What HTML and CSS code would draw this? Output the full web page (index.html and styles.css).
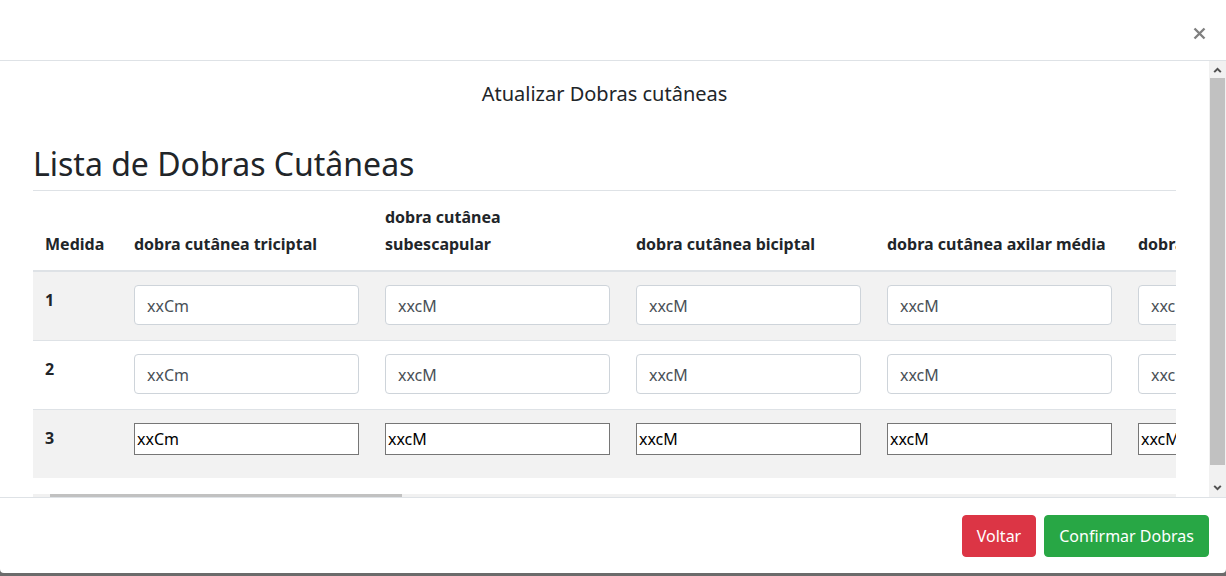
FILE: index.html
```html
<!DOCTYPE html>
<html lang="pt-BR">
<head>
<meta charset="utf-8">
<title>Atualizar Dobras cutâneas</title>
<link rel="stylesheet" href="styles.css">
</head>
<body>
<div class="modal">
  <div class="modal-header">
    <button class="close" type="button" aria-label="Close">
      <svg width="13" height="13" viewBox="0 0 13 13" aria-hidden="true"><path d="M1.5 1.5 L11.5 11.5 M11.5 1.5 L1.5 11.5" stroke="#808080" stroke-width="2.4" stroke-linecap="butt"/></svg>
    </button>
  </div>
  <div class="modal-body">
    <div class="body-scroll">
      <h5 class="modal-title">Atualizar Dobras cutâneas</h5>
      <div class="content">
        <h2 class="list-title">Lista de Dobras Cutâneas</h2>
        <div class="table-wrap">
          <div class="table-view">
            <table class="dobras">
              <colgroup>
                <col class="c-med">
                <col class="c-dob"><col class="c-dob"><col class="c-dob"><col class="c-dob"><col class="c-dob"><col class="c-dob"><col class="c-dob">
                <col class="c-dob"><col class="c-dob"><col class="c-dob"><col class="c-dob"><col class="c-dob"><col class="c-dob"><col class="c-dob">
              </colgroup>
              <thead>
                <tr>
                  <th>Medida</th>
                  <th>dobra cutânea triciptal</th>
                  <th>dobra cutânea<br>subescapular</th>
                  <th>dobra cutânea biciptal</th>
                  <th>dobra cutânea axilar média</th>
                  <th>dobra cutânea supra-ilíaca</th>
                  <th>dobra cutânea abdominal</th>
                  <th>dobra cutânea coxa</th>
                  <th>dobra cutânea panturrilha</th>
                  <th>dobra cutânea peitoral</th>
                  <th>dobra cutânea torácica</th>
                  <th>dobra cutânea supraespinhal</th>
                  <th>dobra cutânea perna medial</th>
                  <th>dobra cutânea antebraço</th>
                  <th>dobra cutânea axilar</th>
                </tr>
              </thead>
              <tbody>
                <tr>
                  <th class="num">1</th>
                  <td><input class="fc" value="xxCm"></td>
                  <td><input class="fc" value="xxcM"></td>
                  <td><input class="fc" value="xxcM"></td>
                  <td><input class="fc" value="xxcM"></td>
                  <td><input class="fc" value="xxcM"></td>
                  <td><input class="fc" value="xxcM"></td>
                  <td><input class="fc" value="xxcM"></td>
                  <td><input class="fc" value="xxcM"></td>
                  <td><input class="fc" value="xxcM"></td>
                  <td><input class="fc" value="xxcM"></td>
                  <td><input class="fc" value="xxcM"></td>
                  <td><input class="fc" value="xxcM"></td>
                  <td><input class="fc" value="xxcM"></td>
                  <td><input class="fc" value="xxcM"></td>
                </tr>
                <tr>
                  <th class="num">2</th>
                  <td><input class="fc" value="xxCm"></td>
                  <td><input class="fc" value="xxcM"></td>
                  <td><input class="fc" value="xxcM"></td>
                  <td><input class="fc" value="xxcM"></td>
                  <td><input class="fc" value="xxcM"></td>
                  <td><input class="fc" value="xxcM"></td>
                  <td><input class="fc" value="xxcM"></td>
                  <td><input class="fc" value="xxcM"></td>
                  <td><input class="fc" value="xxcM"></td>
                  <td><input class="fc" value="xxcM"></td>
                  <td><input class="fc" value="xxcM"></td>
                  <td><input class="fc" value="xxcM"></td>
                  <td><input class="fc" value="xxcM"></td>
                  <td><input class="fc" value="xxcM"></td>
                </tr>
                <tr>
                  <th class="num">3</th>
                  <td><input class="plain" value="xxCm"></td>
                  <td><input class="plain" value="xxcM"></td>
                  <td><input class="plain" value="xxcM"></td>
                  <td><input class="plain" value="xxcM"></td>
                  <td><input class="plain" value="xxcM"></td>
                  <td><input class="plain" value="xxcM"></td>
                  <td><input class="plain" value="xxcM"></td>
                  <td><input class="plain" value="xxcM"></td>
                  <td><input class="plain" value="xxcM"></td>
                  <td><input class="plain" value="xxcM"></td>
                  <td><input class="plain" value="xxcM"></td>
                  <td><input class="plain" value="xxcM"></td>
                  <td><input class="plain" value="xxcM"></td>
                  <td><input class="plain" value="xxcM"></td>
                </tr>
              </tbody>
            </table>
          </div>
          <div class="hscroll">
            <div class="sb-btn"><svg width="17" height="17" viewBox="0 0 17 17" aria-hidden="true"><polygon points="10,4.5 6,8.5 10,12.5 11.3,11 8.8,8.5 11.3,6" fill="#505050"/></svg></div>
            <div class="h-track"><div class="h-thumb"></div></div>
            <div class="sb-btn"><svg width="17" height="17" viewBox="0 0 17 17" aria-hidden="true"><polygon points="7,4.5 11,8.5 7,12.5 5.7,11 8.2,8.5 5.7,6" fill="#505050"/></svg></div>
          </div>
        </div>
      </div>
    </div>
    <div class="vscroll" aria-hidden="true">
      <div class="sb-btn"><svg width="17" height="17" viewBox="0 0 17 17"><polygon points="4.5,10.5 8.5,6.5 12.5,10.5 11.1,11.8 8.5,9.2 5.9,11.8" fill="#505050"/></svg></div>
      <div class="v-track"><div class="v-thumb"></div></div>
      <div class="sb-btn"><svg width="17" height="17" viewBox="0 0 17 17"><polygon points="4.5,6.5 8.5,10.5 12.5,6.5 11.1,5.2 8.5,7.8 5.9,5.2" fill="#505050"/></svg></div>
    </div>
  </div>
  <div class="modal-footer">
    <button class="btn btn-danger" type="button">Voltar</button>
    <button class="btn btn-success" type="button">Confirmar Dobras</button>
  </div>
</div>
</body>
</html>
```
FILE: styles.css
```css
html, body {
  margin: 0;
  height: 100%;
  overflow: hidden;
  background: #6b6b6b;
}

body {
  font-family: "Noto Sans", "Open Sans", sans-serif;
  font-size: 16px;
  color: #212529;
}

.modal {
  height: 573px;
  background: #fff;
  display: flex;
  flex-direction: column;
  border-radius: 0 0 4px 4px;
}

.modal-header {
  flex: none;
  height: 60px;
  border-bottom: 1px solid #dee2e6;
  display: flex;
  justify-content: flex-end;
  align-items: flex-start;
}

.close {
  margin: 27px 20px 0 0;
  padding: 0;
  border: 0;
  background: transparent;
  display: block;
  line-height: 0;
  cursor: pointer;
}

.modal-body {
  flex: none;
  height: 436px;
  display: flex;
  overflow: hidden;
}

.body-scroll {
  flex: 1;
  min-width: 0;
  overflow: hidden;
  padding-top: 18px;
}

.modal-title {
  margin: 0;
  font-size: 20px;
  line-height: 30px;
  font-weight: 400;
  text-align: center;
}

.content {
  margin: 0 33px;
}

.list-title {
  margin: 36px 0 0;
  font-size: 32px;
  line-height: 38px;
  font-weight: 400;
  padding-bottom: 7px;
  border-bottom: 1px solid #dee2e6;
}

.table-view {
  overflow: hidden;
}

.dobras {
  table-layout: fixed;
  width: 3603px;
  border-collapse: collapse;
  margin-bottom: 16px;
}

.c-med { width: 89px; }
.c-dob { width: 251px; }

.dobras th,
.dobras td {
  padding: 13px 12px 12px;
  text-align: left;
}

.dobras thead th {
  vertical-align: bottom;
  border-bottom: 2px solid #dee2e6;
  font-weight: 700;
  line-height: 27px;
  white-space: nowrap;
  overflow: visible;
}

.dobras tbody td,
.dobras tbody th {
  border-top: 1px solid #dee2e6;
  vertical-align: top;
  height: 43px;
}

.dobras tbody tr:nth-child(odd) {
  background: #f2f2f2;
}

.dobras tbody th.num {
  padding-top: 16px;
  height: 40px;
  line-height: 24px;
  font-weight: 700;
}

.fc {
  display: block;
  box-sizing: border-box;
  width: 225px;
  height: 40px;
  padding: 7px 12px 5px;
  border: 1px solid #ced4da;
  border-radius: 4px;
  background: #fff;
  font-family: "Noto Sans", sans-serif;
  font-size: 16px;
  color: #495057;
}

.plain {
  display: block;
  box-sizing: border-box;
  width: 225px;
  height: 32px;
  padding: 0 2px;
  border: 1px solid #767676;
  border-radius: 0;
  background: #fff;
  font-family: "Noto Sans", sans-serif;
  font-size: 16px;
  color: #000;
}

/* drawn scrollbars */
.hscroll {
  display: flex;
  height: 17px;
  background: #f1f1f1;
}

.sb-btn {
  flex: none;
  width: 17px;
  height: 17px;
  background: #f1f1f1;
}

.sb-btn svg {
  display: block;
}

.h-track {
  flex: 1;
  display: flex;
  align-items: stretch;
}

.h-thumb {
  width: 352px;
  background: #c1c1c1;
}

.vscroll {
  flex: none;
  width: 17px;
  display: flex;
  flex-direction: column;
  background: #f1f1f1;
}

.v-track {
  flex: 1;
  display: flex;
  flex-direction: column;
}

.v-thumb {
  height: 387px;
  margin: 0 1px;
  background: #c1c1c1;
}

.modal-footer {
  flex: 1;
  border-top: 1px solid #dee2e6;
  display: flex;
  justify-content: flex-end;
  align-items: flex-start;
  gap: 8px;
  padding: 17px 17px 0;
}

.btn {
  height: 42px;
  padding: 0 14px;
  border: 1px solid transparent;
  border-radius: 4px;
  font-family: "Noto Sans", sans-serif;
  font-size: 16px;
  line-height: 24px;
  color: #fff;
  cursor: pointer;
}

.btn-danger {
  background: #dc3545;
  border-color: #dc3545;
}

.btn-success {
  background: #28a745;
  border-color: #28a745;
}
```
